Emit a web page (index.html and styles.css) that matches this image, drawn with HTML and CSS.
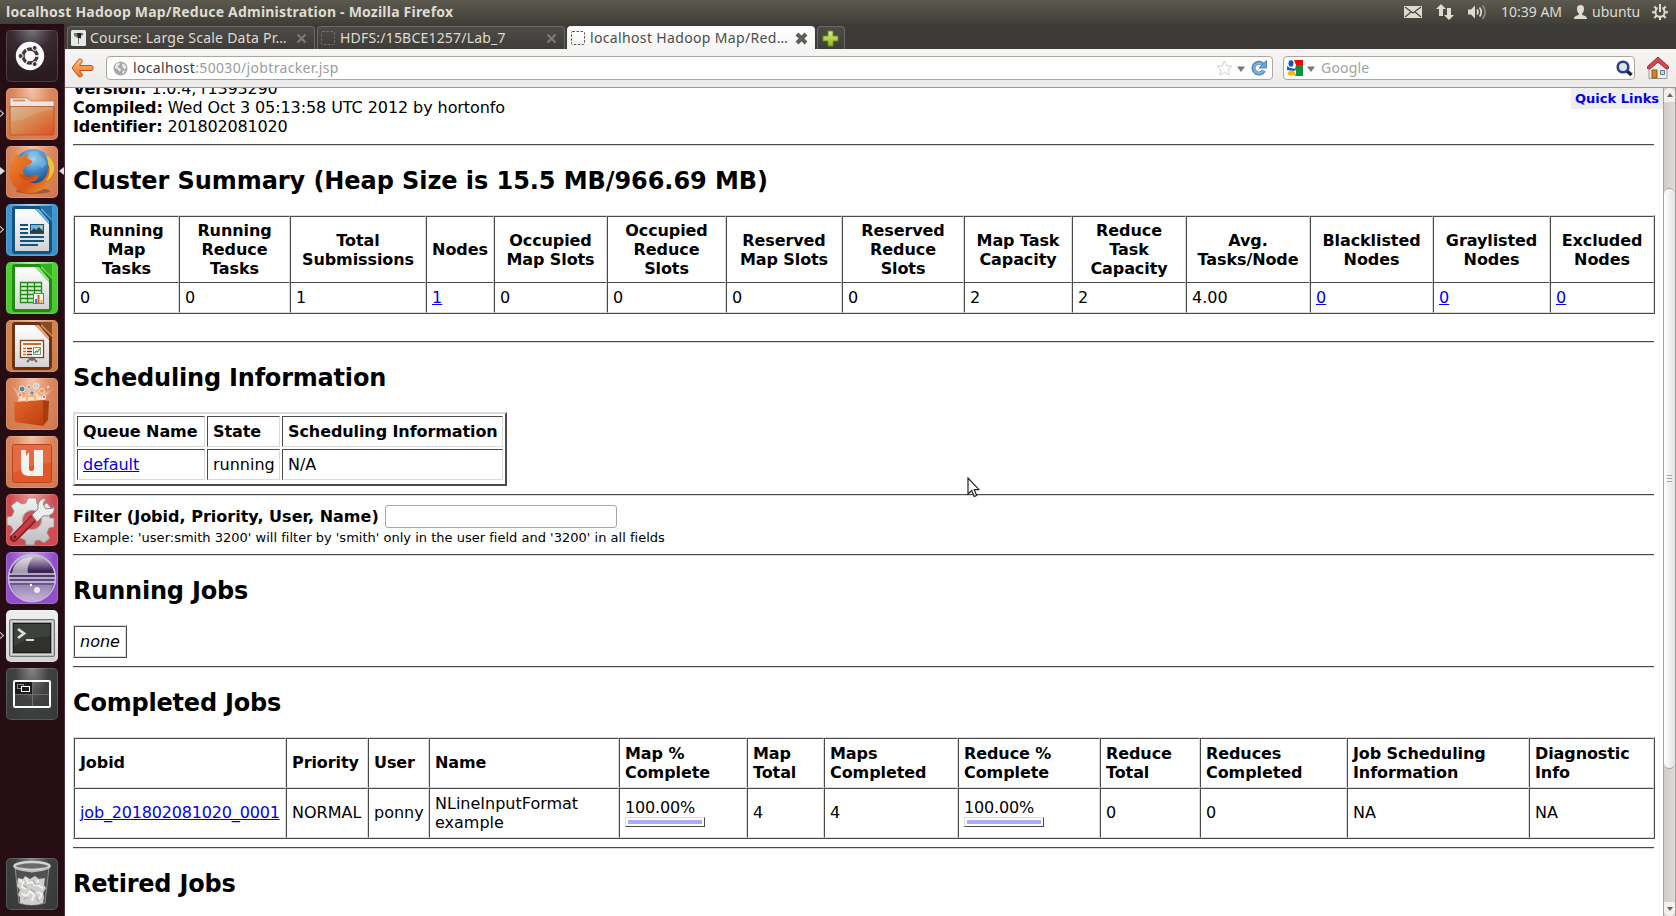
FILE: index.html
```html
<!DOCTYPE html>
<html lang="en">
<head>
<meta charset="utf-8">
<title>localhost Hadoop Map/Reduce Administration</title>
<link rel="stylesheet" href="styles.css">
</head>
<body>
<svg class="defs" width="0" height="0">
  <defs>
    <linearGradient id="gFolder" x1="0" y1="0" x2="1" y2="1"><stop offset="0" stop-color="#cfae86"/><stop offset=".5" stop-color="#d98550"/><stop offset="1" stop-color="#dc4f22"/></linearGradient>
    <radialGradient id="gGlobe" cx=".5" cy=".25" r=".8"><stop offset="0" stop-color="#a9d6f2"/><stop offset=".45" stop-color="#3f86c4"/><stop offset="1" stop-color="#0f2f6b"/></radialGradient>
    <linearGradient id="gFox" x1="0" y1="0" x2="1" y2="1"><stop offset="0" stop-color="#ef8a2c"/><stop offset=".6" stop-color="#d9541a"/><stop offset="1" stop-color="#f0a92c"/></linearGradient>
    <linearGradient id="gPage" x1="0" y1="0" x2="0" y2="1"><stop offset="0" stop-color="#fff"/><stop offset="1" stop-color="#d2d2d2"/></linearGradient>
    <linearGradient id="gBag" x1="0" y1="0" x2="1" y2="1"><stop offset="0" stop-color="#e0672c"/><stop offset="1" stop-color="#bf3f10"/></linearGradient>
    <linearGradient id="gGear" x1="0" y1="0" x2="0" y2="1"><stop offset="0" stop-color="#f2f2f2"/><stop offset="1" stop-color="#bdbdbd"/></linearGradient>
    <linearGradient id="gEcl" x1="0" y1="0" x2="0" y2="1"><stop offset="0" stop-color="#d9cfe2"/><stop offset=".35" stop-color="#3a2352"/><stop offset=".7" stop-color="#79659a"/><stop offset="1" stop-color="#b9a4d2"/></linearGradient>
    <linearGradient id="gArrow" x1="0" y1="0" x2="0" y2="1"><stop offset="0" stop-color="#fcc07c"/><stop offset="1" stop-color="#e8722c"/></linearGradient>
    <linearGradient id="gPlus" x1="0" y1="0" x2="0" y2="1"><stop offset="0" stop-color="#d8ec8a"/><stop offset="1" stop-color="#93b81f"/></linearGradient>
  </defs>
</svg>
<div class="desktop">
  <header class="panel">
    <div class="window-title">localhost Hadoop Map/Reduce Administration - Mozilla Firefox</div>
    <div class="tray">
      <svg class="i-mail" width="18" height="12" viewBox="0 0 18 12"><rect width="18" height="12" fill="#dfdbd2"/><path d="M1 1l8 6 8-6M1 11l6-5M17 11l-6-5" fill="none" stroke="#4b4943" stroke-width="1.2"/></svg>
      <svg class="i-net" width="18" height="16" viewBox="0 0 18 16"><path d="M5 0l5 5H7v7H3V5H0zM13 16l-5-5h3V4h4v7h3z" fill="#dfdbd2"/></svg>
      <svg class="i-vol" width="20" height="16" viewBox="0 0 20 16"><path d="M0 5.500h3l4-4v13l-4-4H0z" fill="#dfdbd2"/><path d="M9 5.500q2 2.500 0 5M11.500 3.500q3.500 4.500 0 9" fill="none" stroke="#dfdbd2" stroke-width="1.700"/><path d="M14.500 1.200q5.500 6.800 0 13.600" fill="none" stroke="#8b8880" stroke-width="1.700"/></svg>
      <span class="clock">10:39 AM</span>
      <svg class="i-user" width="13" height="14" viewBox="0 0 13 14"><path d="M6.500 0C9 0 10 1.500 10 4S9 7.500 8.300 8.300V10c2 .7 4.700 1 4.700 4H0c0-3 2.700-3.300 4.700-4V8.300C4 7.500 3 6.500 3 4s1-4 3.500-4z" fill="#dfdbd2"/></svg>
      <span class="username">ubuntu</span>
      <svg class="i-gear" width="16" height="16" viewBox="0 0 16 16"><circle cx="8" cy="8.200" r="4.600" fill="none" stroke="#dfdbd2" stroke-width="2"/><path d="M8 13v3M0 8.200h3M13 8.200h3M2.300 2.500l2.200 2.200M13.700 2.500l-2.200 2.200M2.300 14l2.200-2.200M13.700 14l-2.200-2.200" stroke="#dfdbd2" stroke-width="2"/><path d="M8 0v8" stroke="#504e46" stroke-width="4.500"/><path d="M8 0v8" stroke="#dfdbd2" stroke-width="2"/></svg>
    </div>
  </header>
  <div class="workspace">
    <nav class="launcher">
      <div class="tile t-dash"><svg viewBox="0 0 52 52"><circle cx="24" cy="26" r="14.200" fill="#fff"/><circle cx="24" cy="26" r="7" fill="none" stroke="#43363b" stroke-width="3.400"/><g stroke="#fff" stroke-width="1.400"><path d="M24 26H34M24 26l-5-9M24 26l-5 9"/></g><circle cx="24" cy="26" r="5" fill="#fff"/><g fill="#43363b" stroke="#fff" stroke-width="1"><circle cx="14.600" cy="26" r="2.500"/><circle cx="28.700" cy="17.900" r="2.500"/><circle cx="28.700" cy="34.100" r="2.500"/></g></svg></div>
      <div class="tile t-orange"><i class="run hollow"></i><svg viewBox="0 0 52 52"><path d="M4 11q0-1 1-1h16l4 3h22q1 0 1 1v8H4z" fill="#e9e7e4" stroke="#b8683e" stroke-width=".6"/><path d="M7 12.500h12" stroke="#d88b62" stroke-width="1.800"/><path d="M4 18.500h44V45q0 2-2 2H6q-2 0-2-2z" fill="url(#gFolder)" stroke="#ba4f22" stroke-width=".8"/><path d="M5 33q12 0 20-5t22-6v-3H5z" fill="#fff" opacity=".13"/></svg></div>
      <div class="tile t-orange"><i class="run solid"></i><i class="run active"></i><svg viewBox="0 0 52 52"><ellipse cx="27" cy="45" rx="17" ry="3" fill="#7a3b1a" opacity=".55"/><circle cx="27" cy="22" r="19" fill="url(#gGlobe)"/><path d="M21 8q5-4 12-2-2 5-7 6zM33 10q6 1 8 8l-5 4-5-5z" fill="#7fc0e8" opacity=".55"/><path d="M8 13q0-5 2-6 2 4 5 4 3-3 8-3-3 3-1 5 4 1 4 3-2 3-6 4l-3 4q0 7 7 7 5-3 9-2-2 7-9 7 5 3 12-1 6-5 6-13 4 3 6-2 1 12-6 19-8 8-18 8-11 0-17-8-5-8-3-15 1-7 4-11z" fill="url(#gFox)"/><path d="M38 7q4 5 4 11 4 8-2 17 5-2 8-10 1-9-5-14-3-2-5-4z" fill="#efc43c"/><path d="M20 29q4 3 9 0-3 6-9 5t-7-6z" fill="#b93d12" opacity=".45"/></svg></div>
      <div class="tile t-blue"><i class="run hollow"></i><svg viewBox="0 0 52 52"><path d="M6 5q0-3 3-3h26v4l11 11v28q0 5-4 5H9q-3 0-3-4z" fill="#125380"/><path d="M33 2h13v13z" fill="#236ea2"/><path d="M9 5h20l14 15v27H9z" fill="url(#gPage)"/><path d="M29 5l14 15V17L33 5z" fill="#68b9e4"/><g stroke="#125380" stroke-width="2"><path d="M14 21h8M14 25h8M14 29h8M14 33h24M14 37h24M14 41h18"/></g><rect x="24.500" y="20.500" width="13" height="9" fill="#75b7db" stroke="#125380"/><path d="M25 29v-2l3-3 2 2 3-3 4 4v2z" fill="#24404c"/><circle cx="35" cy="23" r="1.500" fill="#ecc24a"/></svg></div>
      <div class="tile t-green"><svg viewBox="0 0 52 52"><path d="M6 5q0-3 3-3h26v4l11 11v28q0 5-4 5H9q-3 0-3-4z" fill="#218a14"/><path d="M33 2h13v13z" fill="#38ad23"/><path d="M9 5h20l14 15v27H9z" fill="url(#gPage)"/><path d="M29 5l14 15V17L33 5z" fill="#8bea70"/><rect x="14.500" y="20.500" width="21" height="20" fill="#d8f0d0"/><path d="M14.500 20.500h21v20h-21zM14 24.500h22M14 28.500h22M14 32.500h22M14 36.500h22M21.500 20v21M28.500 20v21" fill="none" stroke="#218a14" stroke-width="1.300"/><rect x="27.500" y="31.500" width="10" height="10" fill="#f5f5f5" stroke="#777"/><path d="M30 41v-4" stroke="#3a84c4" stroke-width="2"/><path d="M32.500 41v-8" stroke="#da5a22" stroke-width="2"/><path d="M35.500 41v-3" stroke="#eab52a" stroke-width="2"/></svg></div>
      <div class="tile t-brown"><svg viewBox="0 0 52 52"><path d="M6 5q0-3 3-3h26v4l11 11v28q0 5-4 5H9q-3 0-3-4z" fill="#6b3112"/><path d="M33 2h13v13z" fill="#8c4a20"/><path d="M9 5h20l14 15v27H9z" fill="url(#gPage)"/><path d="M29 5l14 15V17L33 5z" fill="#e8a678"/><rect x="14.500" y="20.500" width="23" height="17" fill="#fff" stroke="#8b3e12" stroke-width="1.300"/><path d="M17 24h18" stroke="#d9692a" stroke-width="2"/><path d="M17 28.500h3M17 31.500h3M17 34.500h3" stroke="#d9692a" stroke-width="1.700"/><path d="M21 28.500h5M21 31.500h5M21 34.500h5" stroke="#7a3510" stroke-width="1.700"/><rect x="27.500" y="27.500" width="7" height="7" fill="#f4f4f4" stroke="#888"/><path d="M28.500 33l2-2 1 1 2.500-3.500" fill="none" stroke="#30a02c" stroke-width="1.200"/><path d="M21 42l3-3h4l3 3M26 38v3" fill="none" stroke="#6b6b6b" stroke-width="1.800"/></svg></div>
      <div class="tile t-orange"><svg viewBox="0 0 52 52"><path d="M14 22L6 8l12 10L22 3l3 14L34 4l-2 14 14-7-9 11z" fill="#f7c6a6" opacity=".55"/><path d="M11 24l3-6 4 2 4-4 5 1 4-2 4 4 5 1-1 4z" fill="#fbe9dc" opacity=".7"/><g stroke="#efe3da" stroke-width="1"><circle cx="16" cy="11" r="3" fill="#4c87a9"/><circle cx="23" cy="9" r="2" fill="#9c9c9c"/><circle cx="30" cy="8" r="3" fill="#d5d0c8"/><circle cx="36" cy="13" r="2.500" fill="#e1a03d"/><circle cx="26" cy="15" r="2.300" fill="#7f8b8f"/><circle cx="14" cy="17" r="2" fill="#d6866b"/><circle cx="42" cy="9" r="1" fill="#d0c0b8"/><circle cx="38" cy="19" r="1.600" fill="#88a"/></g><path d="M8 24l29-2v26L9 44z" fill="url(#gBag)"/><path d="M37 22l6 1-1 19-5 6z" fill="#a93c0e"/><path d="M21 24v-5q0-1 1-1h6q1 0 1 1v4" fill="none" stroke="#f0b27a" stroke-width="1.800"/></svg></div>
      <div class="tile t-orange"><svg viewBox="0 0 52 52"><rect x="6.500" y="8.500" width="39" height="38" rx="2" fill="#e2562a" stroke="#b8451f"/><path d="M7 9h38v18Q25 27 7 37z" fill="#fff" opacity=".12"/><path d="M15 14h5v6l3-4v17q0 2 3 2 2 0 2-2V14h9v26H23q-8 0-8-8z" fill="#f4f2ef"/></svg></div>
      <div class="tile t-red"><svg viewBox="0 0 52 52"><g fill="url(#gGear)" stroke="#9a8a8a" stroke-width=".8"><path d="M22 4h8l1 6 5 2 5-3 5 6-3 5 1 4h4v9l-5 1-2 5 3 5-6 5-5-3-4 1-1 4h-8l-1-5-5-2-5 3-5-6 3-5-2-4-4-1v-8l5-1 2-5-3-5 6-5 5 3 4-1z"/></g><circle cx="26" cy="26" r="9.500" fill="#cf5258" stroke="#a99" stroke-width="1"/><path d="M8 44L27 25" stroke="#8e1b22" stroke-width="8" stroke-linecap="round"/><path d="M8.500 43L27 24.500" stroke="#c73b42" stroke-width="5" stroke-linecap="round"/><path d="M26 21l6-6q-1-7 4-10l4-1-3 6 3 5 7-1q1-2-1-4 4 4 1 9-4 4-10 3l-6 6z" fill="#eee" stroke="#8a8a8a" stroke-width="1"/><circle cx="9" cy="43" r="1.500" fill="#6d1218"/></svg></div>
      <div class="tile t-purple"><svg viewBox="0 0 52 52"><circle cx="26" cy="26" r="23.500" fill="url(#gEcl)" stroke="#c8b8dc" stroke-width="1.500"/><path d="M7 17Q12 5 27 5 20 14 22 21H6z" fill="#fff" opacity=".55"/><path d="M3 22h46M3 26h46M3 30h46" stroke="#d9cfe8" stroke-width="1.500"/><path d="M5 33h42q-6 15-21 15T5 33z" fill="#e4d8ef" opacity=".35"/><circle cx="31" cy="38" r="3" fill="#fff" opacity=".8"/><circle cx="25" cy="33" r="1.200" fill="#fff"/></svg></div>
      <div class="tile t-silver"><i class="run hollow"></i><svg viewBox="0 0 52 52"><rect x="3.500" y="9.500" width="45" height="37" rx="1.500" fill="#b9b9b7" stroke="#777"/><rect x="5.500" y="11.500" width="41" height="33" fill="#9a9a98" stroke="#d8d8d6"/><rect x="7.500" y="13.500" width="37" height="29" fill="#2e312e" stroke="#1b1b1b"/><path d="M8 14h36v12Q25 26 8 36z" fill="#fff" opacity=".08"/><path d="M12 19l6 4.500-6 4.500" fill="none" stroke="#dcdcda" stroke-width="2.800"/><path d="M20 30h8" stroke="#dcdcda" stroke-width="2"/></svg></div>
      <div class="tile t-gray"><svg viewBox="0 0 52 52"><path d="M26.500 13v26M8 26.500h36" stroke="#6e6e6e"/><rect x="8" y="13" width="36" height="26" rx="1" fill="none" stroke="#fff" stroke-width="2"/><path d="M9 14h17v12H9z" fill="#1b1b1b"/><rect x="11.500" y="16.500" width="6" height="4" fill="none" stroke="#8a8a8a"/><rect x="15.500" y="18.500" width="8" height="5" fill="#1b1b1b" stroke="#fff"/></svg></div>
      <div class="tile t-gray t-trash"><svg viewBox="0 0 52 52"><path d="M9 9l4 36q13 4 26 0l4-36z" fill="#505050" stroke="#8c8c8c"/><path d="M12 20l5 1 2-3 5 3 5-3 4 3 6-1-1 7 2 3-3 5 1 4-1 6q-11 4-23 0l0-6-2-2 2-5-3-4z" fill="#cfcfcd"/><path d="M13 22l4 2-1 5 4 2M20 20l2 5 5-1 2 4M32 22l-1 5 6 3M16 36l5 2 3-5 4 4-2 6M31 34l5 2-3 5" fill="none" stroke="#f1f1f0" stroke-width="2"/><path d="M17 27l4 3M27 22l2 4 4 0M24 31l5 3M18 41l4-2M30 39l3 5" fill="none" stroke="#a5a5a3" stroke-width="1.200"/><ellipse cx="26" cy="8" rx="17.500" ry="4" fill="#6a6a6a" stroke="#d2d2d0" stroke-width="2.500"/><path d="M9 10q17 7 34 0" fill="none" stroke="#bbb" stroke-width="1.800"/></svg></div>
    </nav>
    <main class="browser">
      <div class="tabstrip">
        <div class="tab">
          <svg width="15" height="16" viewBox="0 0 15 16"><rect width="15" height="16" rx="1.500" fill="#e8e8e6"/><path d="M3 3h9v2l-2 1v3l-2-1v6H7V8L5 7l-2-1z" fill="#777"/><path d="M6 3h4v5H7z" fill="#222"/></svg>
          <span class="tab-label l1">Course: Large Scale Data Pr…</span>
          <svg class="close" width="11" height="11" viewBox="0 0 11 11"><path d="M1.500 1.500l8 8M9.500 1.500l-8 8" stroke="#7d7b76" stroke-width="2.200"/></svg>
        </div>
        <div class="tab">
          <svg width="15" height="16" viewBox="0 0 15 16"><rect x=".5" y="1.500" width="13" height="13" rx="1" fill="none" stroke="#73716c" stroke-dasharray="2.500 1.500"/></svg>
          <span class="tab-label l2">HDFS:/15BCE1257/Lab_7</span>
          <svg class="close" width="11" height="11" viewBox="0 0 11 11"><path d="M1.500 1.500l8 8M9.500 1.500l-8 8" stroke="#7d7b76" stroke-width="2.200"/></svg>
        </div>
        <div class="tab current">
          <svg width="15" height="16" viewBox="0 0 15 16"><rect x=".5" y="1.500" width="13" height="13" rx="1" fill="none" stroke="#555" stroke-dasharray="2.500 1.500"/></svg>
          <span class="tab-label l3">localhost Hadoop Map/Red…</span>
          <svg class="close" width="13" height="13" viewBox="0 0 13 13"><path d="M2 2l9 9M11 2l-9 9" stroke="#5e5e5b" stroke-width="4"/></svg>
        </div>
        <div class="tab newtab"><svg width="17" height="17" viewBox="0 0 17 17"><path d="M6 1h5v5h5v5h-5v5H6v-5H1V6h5z" fill="url(#gPlus)" stroke="#6f8f16"/></svg></div>
      </div>
      <div class="navbar">
        <svg class="back" width="23" height="20" viewBox="0 0 23 20"><path d="M10.500 1.500q1.500 1 .5 2.500L8.500 7.500H20q2 0 2 1.800v1.400q0 1.800-2 1.800H8.500L11 16q1 1.500-.5 2.500t-3 0L1 10l6.500-8.500q1.500-1 3 0z" fill="url(#gArrow)" stroke="#c4501a"/></svg>
        <div class="urlbox">
          <svg width="15" height="15" viewBox="0 0 15 15"><circle cx="7.500" cy="7.500" r="7" fill="#a8a8a8"/><path d="M3 3l3-1.500 1 2-2 1v2l3 1.500-1 3-2.500-3L2 7zM9 2l3 2 1.500 3-2 1-2-2zM10 10l2-1-1 3-2 1z" fill="#efefef"/></svg>
          <span class="url"><b>localhost</b>:50030/jobtracker.jsp</span>
          <svg class="star" width="17" height="16" viewBox="0 0 17 16"><path d="M8.500 1l2.200 4.900 5.300.5-4 3.500 1.200 5.200-4.700-2.800-4.700 2.800L5 9.900 1 6.400l5.300-.5z" fill="#fff" stroke="#cfcfcf"/></svg>
          <svg class="drop" width="8" height="6" viewBox="0 0 8 6"><path d="M0 .5h8L4 6z" fill="#77777a"/></svg>
          <svg class="reload" width="16" height="16" viewBox="0 0 16 16"><path d="M12.800 10.500A5.400 5.400 0 1 1 11.500 4" fill="none" stroke="#4c86bd" stroke-width="4"/><path d="M15.500.5V8H8z" fill="#6ea4d4" stroke="#4c86bd"/><path d="M12.500 10.500A5 5 0 1 1 11 4.200" fill="none" stroke="#84b3dc" stroke-width="2"/></svg>
        </div>
        <div class="searchbox">
          <svg width="16" height="16" viewBox="0 0 16 16"><path d="M0 0h7v16H0z" fill="#fff"/><path d="M7 0h9v5H9z" fill="#f00"/><path d="M9 5h7v11H8q2-4 0-7z" fill="#0a9142"/><ellipse cx="4" cy="3.500" rx="2.500" ry="3.300" fill="#1459b3"/><path d="M0 6l3 2 6 1-2 2-7-1z" fill="#1459b3"/><ellipse cx="4.500" cy="13.300" rx="3.700" ry="2.500" fill="#f5b812"/></svg>
          <svg class="drop" width="8" height="6" viewBox="0 0 8 6"><path d="M0 .5h8L4 6z" fill="#77777a"/></svg>
          <span class="placeholder">Google</span>
          <svg class="lens" width="17" height="17" viewBox="0 0 17 17"><path d="M11 11l4.500 4" stroke="#222" stroke-width="3.500"/><circle cx="7" cy="7" r="5.300" fill="#dbe6f5" stroke="#2b3f8c" stroke-width="2.600"/></svg>
        </div>
        <svg class="home" width="24" height="24" viewBox="0 0 24 24"><path d="M3 12L12 4l9 8v10.500H3z" fill="#eee" stroke="#9c9a98"/><path d="M1.500 12.500v-2L12 1l10.500 9.500v2L20 13l-8-7-8 7z" fill="#d24a4f" stroke="#9f2a2e"/><path d="M6 14h5v8H6z" fill="#c98622" stroke="#8a5a12"/><path d="M14.500 14.500h4v4h-4z" fill="#c9d8ea" stroke="#6b7685"/></svg>
      </div>
      <div class="viewport">
        <div class="page">
          <div class="meta">
            <div><b>Version:</b> <span class="digits">1.0.4, r1393290</span></div>
            <div><b>Compiled:</b> Wed Oct 3 05:13:58 UTC 2012 by hortonfo</div>
            <div><b>Identifier:</b> <span class="digits">201802081020</span></div>
          </div>
          <hr>
          <h2 class="summary">Cluster Summary (Heap Size is 15.5 MB/966.69 MB)</h2>
          <table class="grid cluster">
            <colgroup><col class="c105"><col class="c111"><col class="c136"><col class="c68"><col class="c113"><col class="c119"><col class="c116"><col class="c122"><col class="c108"><col class="c114"><col class="c124"><col class="c123"><col class="c117"><col class="c104"></colgroup>
            <tr><th>Running<br>Map<br>Tasks</th><th>Running Reduce Tasks</th><th>Total Submissions</th><th>Nodes</th><th>Occupied Map Slots</th><th>Occupied Reduce Slots</th><th>Reserved Map Slots</th><th>Reserved Reduce Slots</th><th>Map Task Capacity</th><th>Reduce Task Capacity</th><th>Avg. Tasks/Node</th><th>Blacklisted Nodes</th><th>Graylisted Nodes</th><th>Excluded Nodes</th></tr>
            <tr><td>0</td><td>0</td><td>1</td><td><a href="#">1</a></td><td>0</td><td>0</td><td>0</td><td>0</td><td>2</td><td>2</td><td>4.00</td><td><a href="#">0</a></td><td><a href="#">0</a></td><td><a href="#">0</a></td></tr>
          </table>
          <br>
          <hr>
          <h2>Scheduling Information</h2>
          <table class="queues">
            <colgroup><col class="c128"><col class="c73"><col class="c221"></colgroup>
            <tr><th>Queue Name</th><th>State</th><th>Scheduling Information</th></tr>
            <tr><td><a href="#">default</a></td><td>running</td><td>N/A</td></tr>
          </table>
          <hr>
          <div class="filter"><b>Filter (Jobid, Priority, User, Name)</b><input type="text"></div>
          <div class="hint">Example: 'user:smith 3200' will filter by 'smith' only in the user field and '3200' in all fields</div>
          <hr>
          <h2>Running Jobs</h2>
          <table class="grid none"><tr><td><i>none</i></td></tr></table>
          <hr>
          <h2>Completed Jobs</h2>
          <table class="grid jobs">
            <colgroup><col class="c212"><col class="c82"><col class="c61"><col class="c190"><col class="c128"><col class="c77"><col class="c134"><col class="c142"><col class="c100"><col class="c147"><col class="c182"><col class="c125"></colgroup>
            <tr><th class="single">Jobid</th><th class="single">Priority</th><th class="single">User</th><th class="single">Name</th><th>Map % Complete</th><th>Map Total</th><th>Maps Completed</th><th>Reduce % Complete</th><th>Reduce Total</th><th>Reduces Completed</th><th>Job Scheduling Information</th><th>Diagnostic Info</th></tr>
            <tr><td class="single"><a class="digits" href="#">job_201802081020_0001</a></td><td class="single">NORMAL</td><td class="single">ponny</td><td>NLineInputFormat example</td><td class="single"><span class="digits">100.00%</span><div class="meter"><div style="width:100%"></div></div></td><td class="single">4</td><td class="single">4</td><td class="single"><span class="digits">100.00%</span><div class="meter"><div style="width:100%"></div></div></td><td class="single">0</td><td class="single">0</td><td class="single">NA</td><td class="single">NA</td></tr>
          </table>
          <hr>
          <h2>Retired Jobs</h2>
        </div>
        <a class="quicklinks" href="#">Quick Links</a>
        <div class="scrollbar">
          <div class="sb-btn up"><svg width="6" height="4" viewBox="0 0 6 4"><path d="M3 0l3 4H0z" fill="#666"/></svg></div>
          <div class="sb-trough"><div class="sb-thumb"><i></i><i></i><i></i></div></div>
          <div class="sb-btn down"><svg width="6" height="4" viewBox="0 0 6 4"><path d="M0 0h6L3 4z" fill="#666"/></svg></div>
        </div>
      </div>
    </main>
  </div>
  <svg class="cursor" width="13" height="21" viewBox="0 0 13 21"><path d="M1 1v16l3.700-3.500L7.200 19.500l2.500-1.100-2.500-5.700H12z" fill="#fff" stroke="#222" stroke-width="1.200"/></svg>
</div>
</body>
</html>
```
FILE: styles.css
```css
* { box-sizing: border-box; }
body { margin: 0; background: #fff; }
.defs { position: absolute; }
.desktop {
  position: relative;
  width: 1676px;
  height: 916px;
  overflow: hidden;
  display: flex;
  flex-direction: column;
  font-family: "Noto Sans", "Open Sans", sans-serif;
  font-size: 14px;
}

/* Top panel */
.panel {
  height: 24px;
  flex: none;
  display: flex;
  align-items: center;
  justify-content: space-between;
  padding: 0 8px 0 6px;
  background: linear-gradient(#5c5a4e, #3f3e39);
  color: #dfdbd2;
}
.window-title { font-weight: 700; letter-spacing: 0.21px; line-height: 24px; white-space: nowrap; }
.tray { display: flex; align-items: center; line-height: 24px; white-space: nowrap; }
.i-mail { margin-right: 14px; }
.i-net { margin-right: 14px; }
.i-vol { margin-right: 13px; }
.clock { width: 61px; margin-right: 12px; }
.i-user { margin-right: 5px; }
.username { width: 47px; margin-right: 13px; }

.workspace { flex: 1; display: flex; min-height: 0; }

/* Launcher */
.launcher {
  width: 65px;
  flex: none;
  display: flex;
  flex-direction: column;
  gap: 6px;
  padding: 6px 0 6px 6px;
  background: #250d13;
  border-right: 1px solid #4d2f3b;
}
.tile {
  position: relative;
  width: 52px;
  height: 52px;
  flex: none;
  border-radius: 5px;
  box-shadow: inset 0 0 0 1px rgba(255, 255, 255, .15);
}
.tile > svg { display: block; width: 52px; height: 52px; }
.t-dash { background: radial-gradient(circle at 50% 0, #77707a 0, #382a2f 35%, #2a1b21 80%); }
.t-orange { background: radial-gradient(ellipse at 50% 0, #f5c4a6 0, #dd8860 50%, #cc7548 100%); }
.t-blue { background: radial-gradient(ellipse at 50% 0, #9fd3ef 0, #3f97d0 60%, #3a8fc8 100%); }
.t-green { background: radial-gradient(ellipse at 50% 0, #b5f59d 0, #50cf34 60%, #46c62a 100%); }
.t-brown { background: radial-gradient(ellipse at 50% 0, #e9b48c 0, #d08450 60%, #cb7c48 100%); }
.t-red { background: radial-gradient(ellipse at 50% 0, #ea9a97 0, #d04c53 60%, #d04c53 100%); }
.t-purple { background: radial-gradient(ellipse at 50% 0, #c5a0ea 0, #9050cc 60%, #9050cc 100%); }
.t-silver { background: linear-gradient(#f0f0f0, #d4d4d4); }
.t-gray { background: radial-gradient(ellipse at 50% 0, #858585 0, #404242 45%, #363838 100%); }
.t-trash { margin-top: auto; }
.run { position: absolute; }
.hollow { left: -8px; top: 23px; width: 5px; height: 5px; border: solid #d5d0d2; border-width: 1.500px 1.500px 0 0; transform: rotate(45deg); }
.solid { left: -6px; top: 21px; border: 4.500px solid transparent; border-left: 5px solid #dedede; border-right: 0; }
.active { left: 53px; top: 21px; border: 4.500px solid transparent; border-right: 5px solid #dedede; border-left: 0; }

/* Browser chrome */
.browser { flex: 1; min-width: 0; display: flex; flex-direction: column; }
.tabstrip {
  height: 25px;
  flex: none;
  display: flex;
  align-items: flex-end;
  gap: 2px;
  padding-left: 2px;
  background: #3c3b37;
}
.tab {
  width: 248px;
  height: 23px;
  display: flex;
  align-items: center;
  padding: 0 7px 0 3px;
  border: 1px solid #6a6965;
  border-bottom: 0;
  border-radius: 4px 4px 0 0;
  background: linear-gradient(#4c4b47, #3e3d39);
  color: #dfdbd2;
  font-size: 14px;
  white-space: nowrap;
}
.tab-label { margin-left: 4px; line-height: 22px; }
.l1 { letter-spacing: 0.25px; }
.l2 { letter-spacing: 0.2px; }
.l3 { letter-spacing: 0.35px; }
.close { margin-left: auto; }
.current { padding-right: 6px; background: linear-gradient(#fff, #f6f5f4); border-color: #f6f5f4; color: #4c4c4c; }
.newtab { width: 28px; padding: 0 0 0 4px; }
.navbar {
  height: 39px;
  flex: none;
  display: flex;
  align-items: center;
  padding: 0 6px 0 6px;
  background: linear-gradient(#f6f5f4, #edebea);
  border-bottom: 1px solid #999896;
}
.back { margin-right: 12px; }
.urlbox, .searchbox {
  height: 24px;
  display: flex;
  align-items: center;
  border: 1px solid #a9a7a4;
  border-radius: 4px;
  background: #fff;
}
.urlbox { width: 1167px; padding: 0 5px 0 6px; margin-right: 10px; }
.url { margin-left: 5px; color: #9b9b9b; line-height: 24px; letter-spacing: 0.34px; }
.url b { font-weight: 400; color: #3c3c3c; }
.star { margin-left: auto; }
.drop { margin: 2px 0 0 4px; }
.reload { margin-left: 6px; }
.searchbox { width: 352px; padding: 0 1px 0 3px; margin-right: 11px; }
.placeholder { margin-left: 6px; color: #a3a3a3; line-height: 24px; letter-spacing: 0.2px; }
.lens { margin-left: auto; }

/* Web page */
.viewport { position: relative; flex: 1; min-height: 0; display: flex; overflow: hidden; }
.page {
  flex: 1;
  min-width: 0;
  padding: 0 8px;
  background: #fff;
  color: #000;
  font: 16px/19px "DejaVu Sans", sans-serif;
}
.meta { margin-top: -9px; letter-spacing: -0.08px; }
.digits { letter-spacing: -0.17px; }
hr { height: 1px; margin: 8px 1px 9px 0; border: 0; background: #4a4a4a; box-shadow: 0 1px 0 #dadada; overflow: visible; }
h2 { margin: 22px 0 19px; font-size: 24px; line-height: 29px; font-weight: 700; letter-spacing: -0.2px; }
.summary { letter-spacing: -0.07px; }
a { color: #00e; }
table { border-spacing: 0; }
th { letter-spacing: -0.09px; }
th, td { padding: 5px; border: 1px solid; border-color: #4a4a4a #dadada #dadada #4a4a4a; }
.grid { border: 1px solid; border-color: #dadada #4a4a4a #4a4a4a #dadada; }
.cluster, .jobs { width: 1582px; table-layout: fixed; }
.cluster th { padding-top: 4px; padding-bottom: 4px; border-bottom: 0; }
.single { padding-top: 4px; padding-bottom: 6px; }
.queues {
  width: 434px;
  table-layout: fixed;
  border-spacing: 2px;
  padding-bottom: 2px;
  border: 2px solid;
  border-color: #dadada #4a4a4a #4a4a4a #dadada;
}
.queues th, .jobs th { text-align: left; }
.queues th { white-space: nowrap; }
.none { width: 54px; }
.c61 { width: 61px; } .c68 { width: 68px; } .c73 { width: 73px; } .c77 { width: 77px; }
.c82 { width: 82px; } .c100 { width: 100px; } .c104 { width: 104px; } .c105 { width: 105px; }
.c108 { width: 108px; } .c111 { width: 111px; } .c113 { width: 113px; } .c114 { width: 114px; }
.c116 { width: 116px; } .c117 { width: 117px; } .c119 { width: 119px; } .c122 { width: 122px; }
.c123 { width: 123px; } .c124 { width: 124px; } .c125 { width: 125px; } .c128 { width: 128px; }
.c134 { width: 134px; } .c136 { width: 136px; } .c142 { width: 142px; } .c147 { width: 147px; }
.c182 { width: 182px; } .c190 { width: 190px; } .c212 { width: 212px; } .c221 { width: 221px; }
.filter { display: flex; height: 23px; padding-top: 1px; }
.filter b { line-height: 23px; }
.filter input {
  width: 232px;
  height: 23px;
  flex: none;
  margin-left: 6px;
  padding: 0 4px;
  border: 1px solid #a9a7a4;
  border-radius: 3px;
  background: #fff;
}
.hint { height: 19px; padding-top: 1px; font-size: 13px; line-height: 19px; letter-spacing: 0.01px; }
.meter { width: 80px; height: 10px; padding: 2px; border: 1px solid; border-color: #dadada #4a4a4a #4a4a4a #dadada; }
.meter div { height: 4px; background: #aaf; }
.quicklinks {
  position: absolute;
  top: 0;
  right: 13px;
  width: 92px;
  height: 21px;
  padding: 1px 0 0 4px;
  background: #eee;
  font: bold 13px/20px "DejaVu Sans", sans-serif;
  text-decoration: none;
  white-space: nowrap;
}
.scrollbar {
  width: 13px;
  flex: none;
  display: flex;
  flex-direction: column;
  background: #d6d4d2;
  border-left: 1px solid #a5a3a1;
  border-right: 1px solid #a5a3a1;
}
.sb-btn { height: 14px; display: flex; align-items: center; justify-content: center; background: #f2f1f0; }
.sb-btn.up { border-radius: 6px 6px 0 0; }
.sb-btn.down { border-radius: 0 0 6px 6px; }
.sb-trough { flex: 1; padding-top: 86px; background: linear-gradient(90deg, #cfcdcb, #dedcda); border-radius: 6px; }
.sb-thumb {
  height: 581px;
  display: flex;
  flex-direction: column;
  align-items: center;
  justify-content: center;
  gap: 2px;
  border: 1px solid #a5a3a1;
  border-width: 1px 0;
  border-radius: 6px;
  background: linear-gradient(90deg, #fff, #e4e2e1);
}
.sb-thumb i { width: 5px; height: 1px; background: #a5a3a1; }

.cursor { position: absolute; left: 967px; top: 477px; }
```
